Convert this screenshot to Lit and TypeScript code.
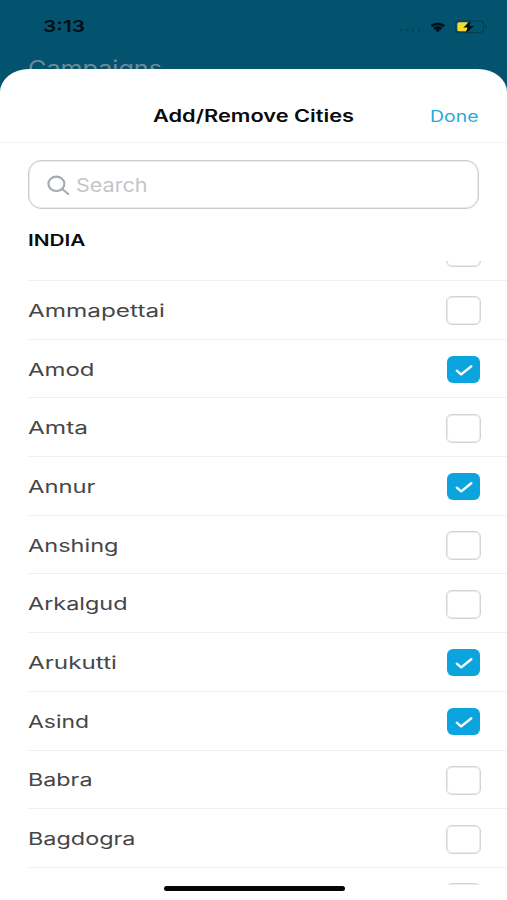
import { LitElement, html, svg, css } from "lit";
import { customElement, property } from "lit/decorators.js";

/** A line of text set to an exact advance width. */
@customElement("wide-text")
class WideText extends LitElement {
  @property() text = "";
  @property({ type: Number }) width = 100;
  @property({ type: Number }) size = 17.5;

  static styles = css`
    :host { display: block; line-height: 0; }
    svg { display: block; overflow: visible; }
    text { fill: currentColor; }
  `;

  render() {
    return html`<svg width=${this.width} height="24">
      ${svg`<text x="0" y="18" font-size=${this.size} textLength=${this.width} lengthAdjust="spacingAndGlyphs">${this.text}</text>`}
    </svg>`;
  }
}

@customElement("check-box")
class CheckBox extends LitElement {
  @property({ type: Boolean, reflect: true }) checked = false;

  static styles = css`
    :host {
      display: flex; align-items: center; justify-content: center;
      box-sizing: border-box; width: 35px; height: 29px; flex: none;
      border: 1px solid #d3d4d4; border-radius: 6px; background: #fff;
      box-shadow: inset 0 0 0 1px #ebebec;
    }
    :host([checked]) {
      width: 33px; height: 27px; margin-right: 1px;
      border: 0; background: #0ba4de; box-shadow: none;
    }
    svg { display: block; }
  `;

  render() {
    return this.checked
      ? html`<svg width="20" height="14" viewBox="0 0 20 14"><path d="M2.8 7.7 7.2 11.4 17.3 3.2" fill="none" stroke="#fff" stroke-width="2.4" stroke-linecap="round" stroke-linejoin="round"/></svg>`
      : null;
  }
}

interface City { name: string; width: number; checked: boolean; }

const cities: City[] = [
  { name: "", width: 0, checked: false },
  { name: "Ammapettai", width: 137, checked: false },
  { name: "Amod", width: 66.5, checked: true },
  { name: "Amta", width: 60, checked: false },
  { name: "Annur", width: 67.5, checked: true },
  { name: "Anshing", width: 90.5, checked: false },
  { name: "Arkalgud", width: 99.5, checked: false },
  { name: "Arukutti", width: 89, checked: true },
  { name: "Asind", width: 61, checked: true },
  { name: "Babra", width: 64.5, checked: false },
  { name: "Bagdogra", width: 107.5, checked: false },
  { name: "", width: 0, checked: false },
];

@customElement("app-root")
class AppRoot extends LitElement {
  static styles = css`
    :host {
      display: block; position: relative; width: 507px; height: 900px;
      overflow: hidden; background: #03536e;
      font-family: Inter, "Liberation Sans", sans-serif;
    }
    * { box-sizing: border-box; }
    .status {
      height: 51px; padding: 14px 19px 0 43px;
      display: flex; align-items: flex-start; justify-content: space-between;
    }
    .time { color: #020d14; font-weight: 600; }
    .indicators { display: block; }
    .behind { height: 18px; padding: 7px 0 0 28px; color: #6e8a98; font-weight: 400; }
    .sheet {
      position: relative; height: 831px; display: flex; flex-direction: column;
      background: #fff; border-radius: 29px 29px 0 0 / 23px 23px 0 0;
    }
    .header {
      height: 74px; flex: none; padding: 35px 28.5px 0 153px;
      display: flex; align-items: flex-start; justify-content: space-between;
      border-bottom: 1px solid #f3f3f4;
    }
    .title { color: #0b0b0c; font-weight: 600; }
    .done { color: #29a9d6; }
    .search {
      height: 49px; flex: none; margin: 17px 28px 0 28px; padding: 2px 0 0 17.5px;
      display: flex; align-items: center; gap: 5px;
      border: 1px solid #cbcccd; border-radius: 13px; color: #c3c5c8;
      box-shadow: inset 0 0 0 1px #ebebec;
    }
    .section { height: 52px; flex: none; padding: 19px 0 0 28px; color: #0b0b0c; font-weight: 600; }
    .list { height: 624px; flex: none; overflow: hidden; }
    .rows { margin-top: -38.7px; }
    .row {
      height: 58.7px; margin-left: 27.5px; padding: 2px 26px 0 0;
      display: flex; align-items: center; justify-content: space-between;
      border-bottom: 1px solid #f0f0f1; color: #464648;
    }
    .home {
      position: absolute; left: 163.5px; bottom: 9px; width: 181px; height: 5.5px;
      border-radius: 3px; background: #050505;
    }
  `;

  render() {
    return html`
      <div class="status">
        <wide-text class="time" text="3:13" width="42" size="16.5"></wide-text>
        <svg class="indicators" width="90" height="26" viewBox="0 0 90 26">
          <g fill="#033f56">
            <circle cx="3" cy="16.3" r="1.1"/><circle cx="9" cy="16.3" r="1.1"/>
            <circle cx="15" cy="16.3" r="1.1"/><circle cx="21" cy="16.3" r="1.1"/>
          </g>
          <g fill="none" stroke="#020d14" stroke-width="2.4">
            <path d="M33.4 12Q39.8 8 46.2 12"/>
            <path d="M36 14.6Q39.8 12.3 43.6 14.6"/>
          </g>
          <path d="M37.3 16Q39.8 14.2 42.3 16L39.8 18Z" fill="#020d14"/>
          <rect x="57.5" y="7" width="28" height="11.6" rx="3.5" fill="none" stroke="#053f54" stroke-width="1.2"/>
          <path d="M87 10.3Q90.3 12.8 87 15.3Z" fill="#053f54"/>
          <path d="M61.3 8.3H70L66.8 13H70L68.2 17.3H61.3Q59.3 17.3 59.3 15.8V9.8Q59.3 8.3 61.3 8.3Z" fill="#f7d92f"/>
          <path d="M72.6 7 65.3 13.5H69.6L68 19 76 12H71.4Z" fill="#020d14"/>
        </svg>
      </div>
      <div class="behind"><wide-text text="Campaigns" width="134" size="21.5"></wide-text></div>
      <div class="sheet">
        <div class="header">
          <wide-text class="title" text="Add/Remove Cities" width="201" size="17"></wide-text>
          <wide-text class="done" text="Done" width="48.5" size="15.5"></wide-text>
        </div>
        <div class="search">
          <svg width="24" height="22" viewBox="0 0 24 22" fill="none" stroke="#a4aaae" stroke-width="2.1" stroke-linecap="round">
            <ellipse cx="9.4" cy="8.8" rx="8" ry="7.2"/><path d="M15.2 14 21.3 19"/>
          </svg>
          <wide-text text="Search" width="71.5" size="18.5"></wide-text>
        </div>
        <div class="section"><wide-text text="INDIA" width="57.5" size="16"></wide-text></div>
        <div class="list"><div class="rows">
          ${cities.map((c) => html`<div class="row">
            <wide-text text=${c.name} width=${c.width}></wide-text>
            <check-box ?checked=${c.checked}></check-box>
          </div>`)}
        </div></div>
        <div class="home"></div>
      </div>
    `;
  }
}
